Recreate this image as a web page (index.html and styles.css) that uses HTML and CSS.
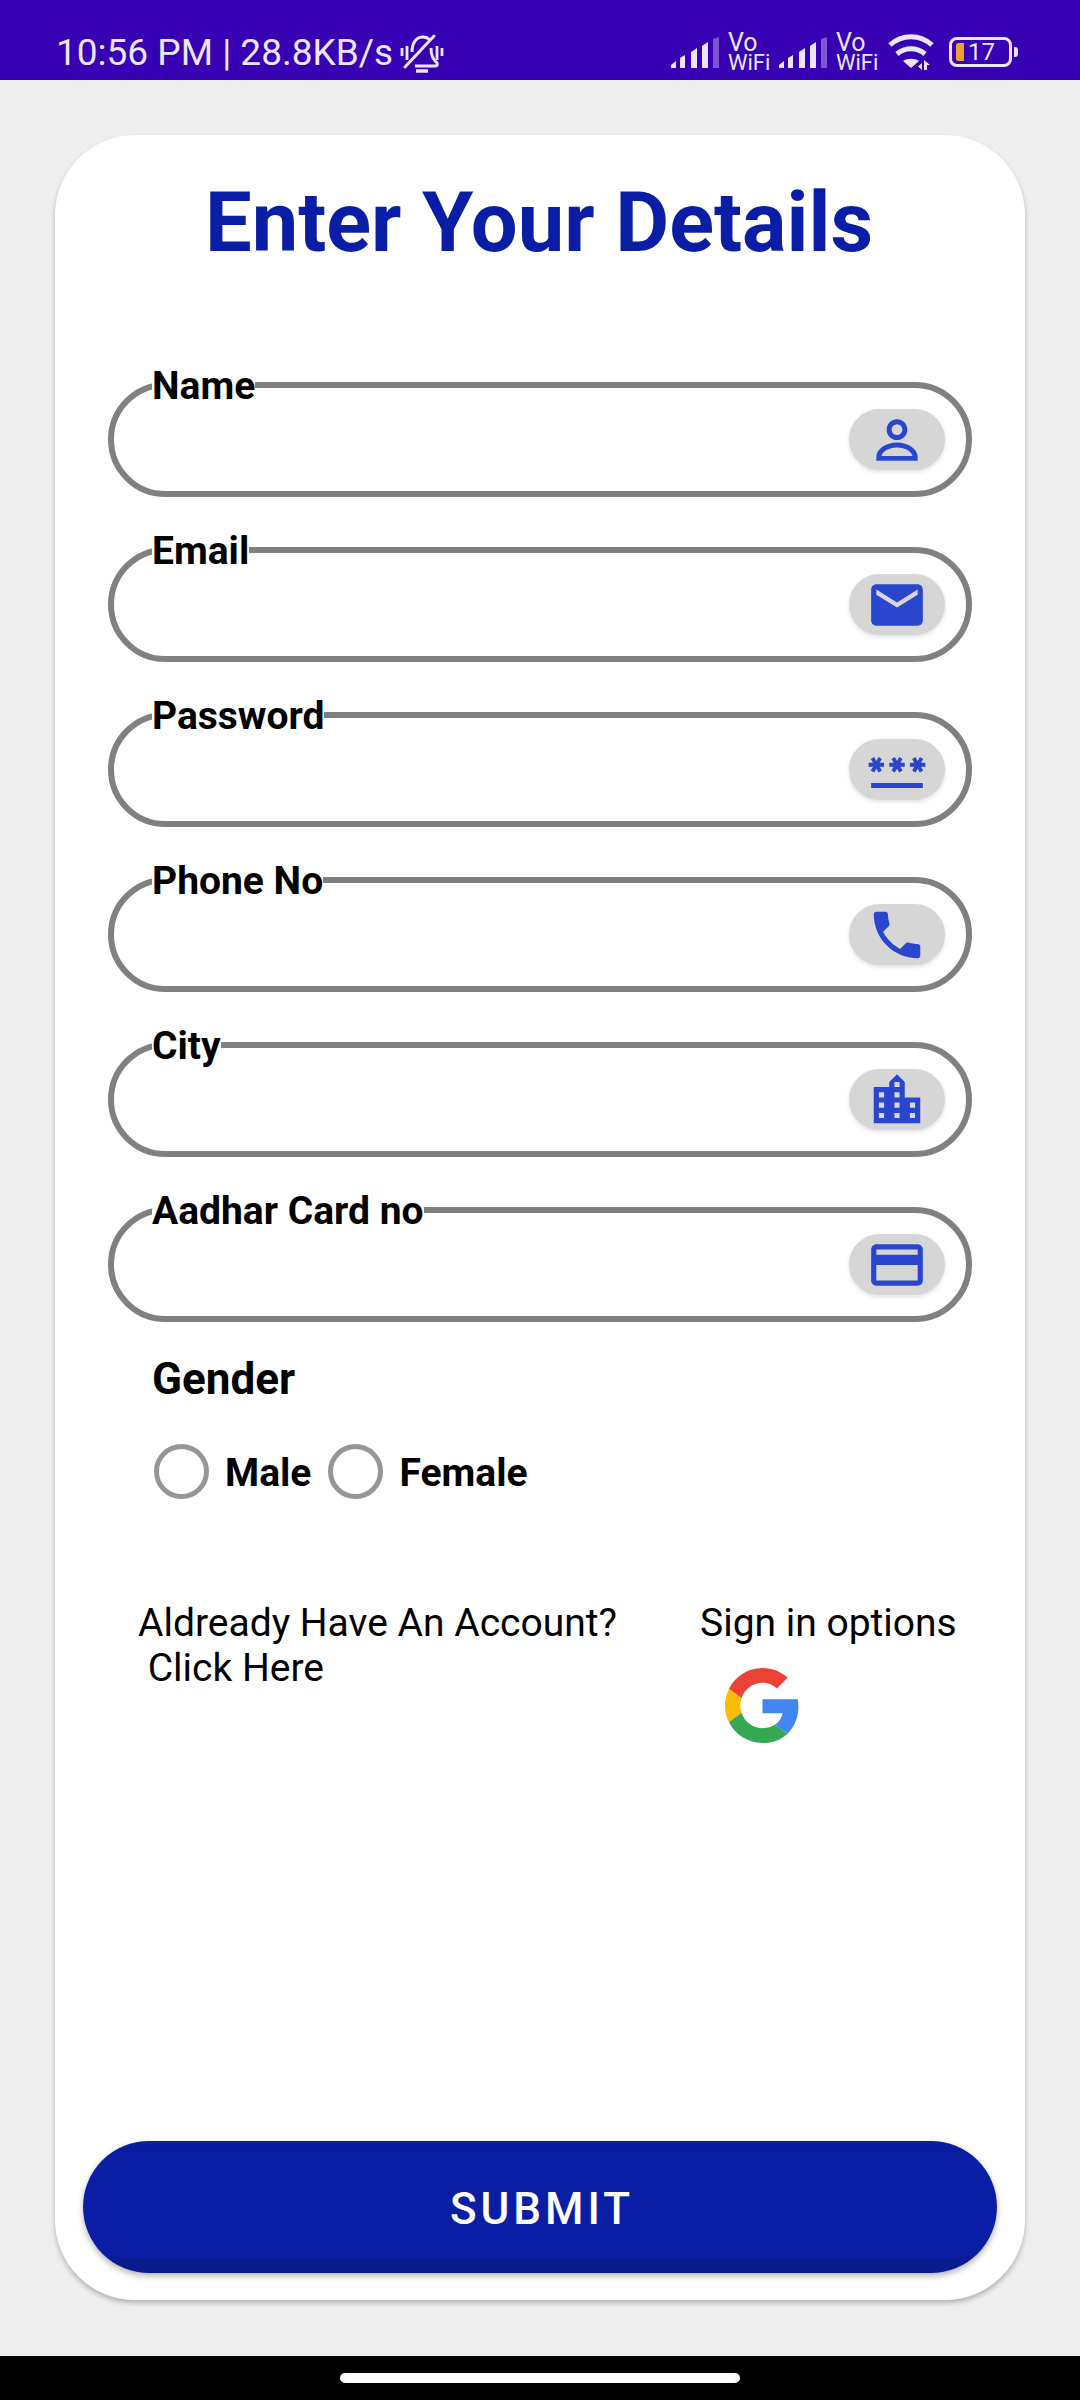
FILE: index.html
```html
<!DOCTYPE html>
<html lang="en">

<head>
    <meta charset="UTF-8">
    <title>Enter Your Details</title>
    <link rel="stylesheet" href="styles.css">
</head>

<body>
    <div class="status">
        <div class="status-left">
            <span>10:56 PM | 28.8KB/s</span>
            <svg class="bell" viewBox="0 0 44 40" fill="none" stroke="#ece6fc" stroke-width="3">
                <path d="M12 18c0-9 4-15 11-15 3 0 5 1 7 3"/>
                <path d="M31 14c0 8 2 11 6 15 1 2 0 3-2 3H15"/>
                <path d="M5 33 34 2" stroke-linecap="round"/>
                <path d="M16 37h12" stroke-width="3.5"/>
                <path d="M2 14v8M7 12v14M37 12v14M42 14v8" stroke-width="2.8"/>
            </svg>
        </div>
        <div class="status-right">
            <svg class="signal" viewBox="0 0 48 32">
                <path fill="#ece6fc" d="M0 31v-3l5-4v7zM9 31V21l5-3v13zM20 31V15l6-4v20zM31 31V9l6-4v26z"/>
                <path fill="#7d55d0" d="M42 31V2l6-2v31z"/>
            </svg>
            <div class="vowifi">Vo WiFi</div>
            <svg class="signal" viewBox="0 0 48 32">
                <path fill="#ece6fc" d="M0 31v-3l5-4v7zM9 31V21l5-3v13zM20 31V15l6-4v20zM31 31V9l6-4v26z"/>
                <path fill="#7d55d0" d="M42 31V2l6-2v31z"/>
            </svg>
            <div class="vowifi">Vo WiFi</div>
            <svg class="wifi" viewBox="0 0 46 37" fill="none" stroke="#ece6fc" stroke-width="5">
                <path d="M2 12c12-11 30-11 42 0"/>
                <path d="M9 21c8-7 20-7 28 0"/>
                <path fill="#ece6fc" stroke="none" d="M15 28c4-3 12-3 16 0l-8 7z"/>
                <path fill="#ece6fc" stroke="none" d="M34 37v-7l-4 3.500zM36 37v-10l6 5h-3v5z"/>
            </svg>
            <div class="battery">
                <div class="battery-body">
                    <i class="battery-level"></i>
                    <span>17</span>
                </div>
                <i class="battery-tip"></i>
            </div>
        </div>
    </div>

    <div class="page">
        <form class="card">
            <h1 class="title">Enter Your Details</h1>

            <div class="fields">
                <div class="field">
                    <label class="field-label">Name</label>
                    <div class="field-icon">
                        <svg viewBox="0 0 24 24"><path d="M12 5.900a2.100 2.100 0 1 1 0 4.200 2.100 2.100 0 0 1 0-4.200M12 4C9.790 4 8 5.790 8 8s1.790 4 4 4 4-1.790 4-4-1.790-4-4-4zm0 9c-4.400 0-8 2.600-8 5.500V20h16v-1.500c0-2.900-3.600-5.500-8-5.500zm0 1.900c3.200 0 5.700 1.600 6 3.300H6c.3-1.700 2.800-3.300 6-3.300z"/></svg>
                    </div>
                </div>
                <div class="field">
                    <label class="field-label">Email</label>
                    <div class="field-icon">
                        <svg viewBox="0 0 24 24"><path d="M20 4H4c-1.100 0-2 .9-2 2v12c0 1.100.9 2 2 2h16c1.100 0 2-.9 2-2V6c0-1.100-.9-2-2-2zm0 4l-8 5-8-5V6l8 5 8-5v2z"/></svg>
                    </div>
                </div>
                <div class="field">
                    <label class="field-label">Password</label>
                    <div class="field-icon">
                        <svg viewBox="0 0 24 24"><path d="M2 17h20v2H2v-2zm1.150-4.050L4 11.470l.85 1.480 1.300-.75-.85-1.480H7v-1.500H5.300l.85-1.470L4.850 7 4 8.470 3.150 7l-1.300.75.85 1.470H1v1.500h1.700l-.85 1.480 1.300.75zm6.700-.75l1.300.75.85-1.480.85 1.480 1.300-.75-.85-1.480H15v-1.500h-1.700l.85-1.470-1.300-.75L12 8.470 11.150 7l-1.300.75.85 1.470H9v1.500h1.700l-.85 1.480zM23 9.220h-1.700l.85-1.470-1.300-.75L20 8.470 19.150 7l-1.300.75.85 1.470H17v1.500h1.700l-.85 1.480 1.300.75.85-1.480.85 1.480 1.300-.75-.85-1.480H23v-1.500z"/></svg>
                    </div>
                </div>
                <div class="field">
                    <label class="field-label">Phone No</label>
                    <div class="field-icon">
                        <svg viewBox="0 0 24 24"><path d="M6.620 10.790c1.440 2.830 3.760 5.140 6.590 6.590l2.200-2.200c.27-.27.67-.36 1.020-.24 1.120.37 2.330.57 3.570.57.55 0 1 .45 1 1V20c0 .55-.45 1-1 1-9.390 0-17-7.610-17-17 0-.55.45-1 1-1h3.500c.55 0 1 .45 1 1 0 1.250.2 2.450.57 3.570.11.35.03.74-.25 1.020l-2.200 2.200z"/></svg>
                    </div>
                </div>
                <div class="field">
                    <label class="field-label">City</label>
                    <div class="field-icon">
                        <svg viewBox="0 0 24 24"><path d="M15 11V5l-3-3-3 3v2H3v14h18V11h-6zm-8 8H5v-2h2v2zm0-4H5v-2h2v2zm0-4H5V9h2v2zm6 8h-2v-2h2v2zm0-4h-2v-2h2v2zm0-4h-2V9h2v2zm0-4h-2V5h2v2zm6 12h-2v-2h2v2zm0-4h-2v-2h2v2z"/></svg>
                    </div>
                </div>
                <div class="field">
                    <label class="field-label">Aadhar Card no</label>
                    <div class="field-icon">
                        <svg viewBox="0 0 24 24"><path d="M20 4H4c-1.110 0-1.990.89-1.990 2L2 18c0 1.110.89 2 2 2h16c1.110 0 2-.89 2-2V6c0-1.110-.89-2-2-2zm0 14H4v-6h16v6zm0-10H4V6h16v2z"/></svg>
                    </div>
                </div>
            </div>

            <div class="gender">
                <div class="gender-title">Gender</div>
                <div class="gender-options">
                    <i class="radio"></i>
                    <span class="radio-text">Male</span>
                    <i class="radio"></i>
                    <span class="radio-text">Female</span>
                </div>
            </div>

            <div class="account">
                <div class="account-text">Aldready Have An Account?
 Click Here</div>
                <div class="signin">
                    <div>Sign in options</div>
                    <svg class="google" viewBox="0 0 48 48">
                        <path fill="#EA4335" d="M24 9.500c3.540 0 6.710 1.220 9.210 3.600l6.850-6.850C35.900 2.380 30.470 0 24 0 14.620 0 6.510 5.380 2.560 13.220l7.980 6.190C12.430 13.720 17.740 9.500 24 9.500z"/>
                        <path fill="#4285F4" d="M46.980 24.550c0-1.570-.15-3.090-.38-4.550H24v9.020h12.940c-.58 2.960-2.260 5.480-4.780 7.180l7.730 6c4.510-4.180 7.090-10.360 7.090-17.650z"/>
                        <path fill="#FBBC05" d="M10.530 28.590c-.48-1.450-.76-2.990-.76-4.590s.27-3.140.76-4.590l-7.980-6.190C.92 16.460 0 20.120 0 24c0 3.880.92 7.540 2.560 10.780l7.970-6.190z"/>
                        <path fill="#34A853" d="M24 48c6.480 0 11.930-2.130 15.890-5.810l-7.730-6c-2.150 1.450-4.920 2.300-8.160 2.300-6.260 0-11.570-4.220-13.470-9.910l-7.980 6.190C6.510 42.620 14.620 48 24 48z"/>
                    </svg>
                </div>
            </div>

            <button class="submit" type="button">SUBMIT</button>
        </form>
    </div>

    <div class="navbar">
        <i class="home-pill"></i>
    </div>
</body>

</html>
```

FILE: styles.css
```css
* {
    padding: 0;
    margin: 0;
    box-sizing: border-box;
}

body {
    width: 1080px;
    height: 2400px;
    display: flex;
    flex-direction: column;
    background: #eeeeee;
    font-family: Roboto, sans-serif;
    color: #000;
}

/* status bar */
.status {
    height: 80px;
    flex: none;
    background: #3700b3;
    color: #ece6fc;
    display: flex;
    justify-content: space-between;
    padding: 32px 62px 0 56px;
}

.status-left {
    display: flex;
    align-items: flex-start;
    font-size: 37px;
    line-height: 42px;
}

.bell {
    width: 44px;
    height: 40px;
    margin: 2px 0 0 7px;
}

.status-right {
    display: flex;
    align-items: flex-start;
}

.signal {
    width: 48px;
    height: 32px;
    margin: 5px 9px 0 0;
}

.vowifi {
    width: 42px;
    margin: 1px 9px 0 0;
    font-size: 22px;
    line-height: 20px;
}

.vowifi::first-line {
    font-size: 25px;
}

.wifi {
    width: 46px;
    height: 37px;
    margin: 1px 15px 0 1px;
}

.battery {
    display: flex;
    align-items: center;
    height: 30px;
    margin-top: 5px;
}

.battery-body {
    width: 63px;
    height: 30px;
    border: 3px solid #ece6fc;
    border-radius: 8px;
    display: flex;
    align-items: center;
    padding-left: 4px;
    font-size: 24px;
}

.battery-level {
    width: 8px;
    height: 18px;
    background: #e9a02e;
    border-radius: 2px 0 0 2px;
    margin-right: 4px;
}

.battery-tip {
    width: 4px;
    height: 10px;
    margin-left: 2px;
    background: #ece6fc;
    border-radius: 0 3px 3px 0;
}

/* card */
.page {
    flex: 1;
    padding: 55px 55px 56px;
    display: flex;
}

.card {
    flex: 1;
    background: #fff;
    border-radius: 80px;
    box-shadow: 0 3px 5px rgba(0, 0, 0, 0.25);
    display: flex;
    flex-direction: column;
    padding: 42px 28px 27px;
}

.title {
    font-size: 83px;
    line-height: 92px;
    font-weight: 700;
    color: #0a1ea5;
    text-align: center;
    padding-right: 2px;
}

.fields {
    display: flex;
    flex-direction: column;
    gap: 50px;
    margin: 113px 25px 0;
}

.field {
    height: 115px;
    border: 6px solid #808080;
    border-radius: 58px;
    position: relative;
    display: flex;
    align-items: center;
    justify-content: flex-end;
    padding-right: 21px;
}

.field-label {
    position: absolute;
    left: 38px;
    top: -20px;
    background: #fff;
    font-size: 39px;
    line-height: 36px;
    font-weight: 700;
}

.field-icon {
    width: 96px;
    height: 61px;
    border-radius: 31px;
    background: #d6d6d6;
    box-shadow: 0 2px 4px rgba(0, 0, 0, 0.12);
    display: flex;
    align-items: center;
    justify-content: center;
}

.field-icon svg {
    width: 62px;
    height: 62px;
    flex: none;
    fill: #2a46cf;
}

/* gender */
.gender {
    margin: 32px 0 0 69px;
}

.gender-title {
    font-size: 44px;
    line-height: 50px;
    font-weight: 700;
}

.gender-options {
    display: flex;
    align-items: center;
    margin-top: 40px;
}

.radio {
    width: 55px;
    height: 55px;
    margin-left: 2px;
    border: 5px solid #969696;
    border-radius: 50%;
    flex: none;
}

.radio-text {
    margin: 0 15px 0 16px;
    padding-top: 3px;
    font-size: 39px;
    font-weight: 700;
}

/* account */
.account {
    display: flex;
    margin: 102px 0 0 55px;
    font-size: 39px;
    line-height: 45px;
}

.account-text {
    width: 562px;
    white-space: pre;
}

.google {
    display: block;
    width: 75px;
    height: 75px;
    margin: 22px 0 0 25px;
}

/* submit */
.submit {
    margin-top: auto;
    height: 132px;
    border: 0;
    border-radius: 66px;
    padding: 4px 0 0 4px;
    background: linear-gradient(to bottom, #0a1da1 14px, #0a1ea5 14px, #0a1ea5 116px, #081a8c 116px);
    box-shadow: 0 3px 6px rgba(0, 0, 0, 0.3);
    color: #fff;
    font-family: Roboto, sans-serif;
    font-size: 44px;
    font-weight: 500;
    letter-spacing: 0.09em;
}

/* nav bar */
.navbar {
    height: 44px;
    flex: none;
    background: #000;
    display: flex;
    justify-content: center;
    padding-top: 17px;
}

.home-pill {
    width: 400px;
    height: 10px;
    background: #fff;
    border-radius: 5px;
}
```
